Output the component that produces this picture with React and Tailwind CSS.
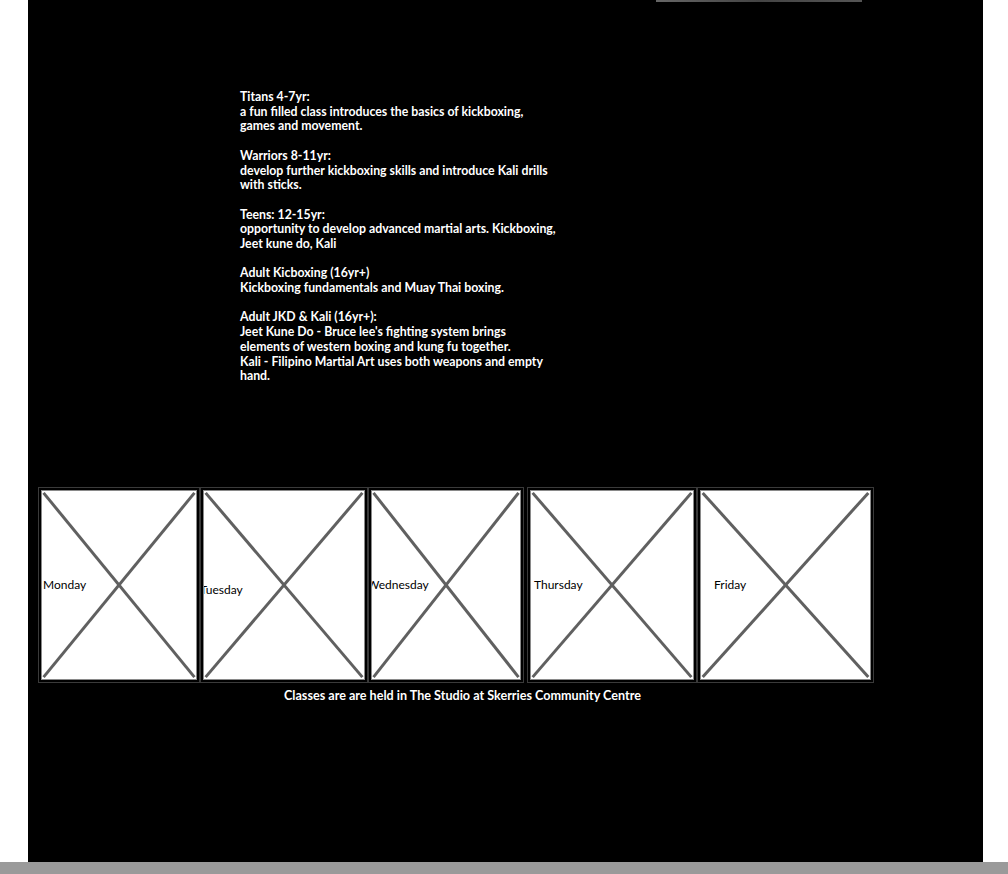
import React from 'react';

const classes = [
  { title: 'Titans 4-7yr:', lines: ['a fun filled class introduces the basics of kickboxing,', 'games and movement.'] },
  { title: 'Warriors 8-11yr:', lines: ['develop further kickboxing skills and introduce Kali drills', 'with sticks.'] },
  { title: 'Teens: 12-15yr:', lines: ['opportunity to develop advanced martial arts. Kickboxing,', 'Jeet kune do, Kali'] },
  { title: 'Adult Kicboxing (16yr+)', lines: ['Kickboxing fundamentals and Muay Thai boxing.'] },
  {
    title: 'Adult JKD & Kali (16yr+):',
    lines: [
      "Jeet Kune Do - Bruce lee's fighting system brings",
      'elements of western boxing and kung fu together.',
      'Kali - Filipino Martial Art uses both weapons and empty',
      'hand.',
    ],
  },
];

// broken image placeholders for the timetable days
const days = [
  { name: 'Monday', w: 'w-[162px]', label: 'left-[1px] top-[87px]' },
  { name: 'Tuesday', w: 'w-[168px]', label: '-left-[4px] top-[92px]' },
  { name: 'Wednesday', w: 'w-[156px]', label: '-left-[5px] top-[87px]' },
  { name: 'Thursday', w: 'w-[170px]', label: 'left-[3px] top-[87px]' },
  { name: 'Friday', w: 'w-[177px]', label: 'left-[13px] top-[87px]' },
];

const DayBox = ({ day }) => (
  <div className={`${day.w} h-[196px] border border-[#3a3a3a] p-[2px] bg-black`}>
    <div className="relative w-full h-full border border-[#8a8a8a] bg-white overflow-hidden">
      <svg className="absolute inset-0 w-full h-full" preserveAspectRatio="none" viewBox="0 0 100 100">
        <line x1="1" y1="1" x2="99" y2="99" stroke="#606060" strokeWidth="3" vectorEffect="non-scaling-stroke" />
        <line x1="99" y1="1" x2="1" y2="99" stroke="#606060" strokeWidth="3" vectorEffect="non-scaling-stroke" />
      </svg>
      <span className={`absolute ${day.label} text-[12px] leading-[14px] text-black whitespace-nowrap`}>{day.name}</span>
    </div>
  </div>
);

export default function App() {
  return (
    <div className="w-[1008px] h-[874px] bg-white flex flex-col overflow-hidden" style={{ fontFamily: 'Lato, "Liberation Sans", sans-serif' }}>
      <div className="ml-[28px] w-[955px] h-[862px] bg-black flex flex-col">
        {/* bottom edge of header image */}
        <div className="ml-[628px] w-[206px] h-[2px] bg-gradient-to-r from-[#666] via-[#444] to-[#555]" />

        <div className="ml-[212px] mt-[88px] w-[340px] text-white text-[12.3px] leading-[14.7px] font-bold space-y-[14.7px]">
          {classes.map(c => (
            <div key={c.title}>
              <p>{c.title}</p>
              {c.lines.map(l => (
                <p key={l}>{l}</p>
              ))}
            </div>
          ))}
        </div>

        <div className="ml-[10px] mt-[103px] flex items-start">
          <DayBox day={days[0]} />
          <DayBox day={days[1]} />
          <DayBox day={days[2]} />
          <div className="w-[3px]" />
          <DayBox day={days[3]} />
          <DayBox day={days[4]} />
        </div>

        <p className="mt-[6px] ml-[256px] text-white text-[12.6px] leading-[14px] font-bold">
          Classes are are held in The Studio at Skerries Community Centre
        </p>
      </div>
      <div className="h-[12px] bg-[#9a9a9a]" />
    </div>
  );
}
